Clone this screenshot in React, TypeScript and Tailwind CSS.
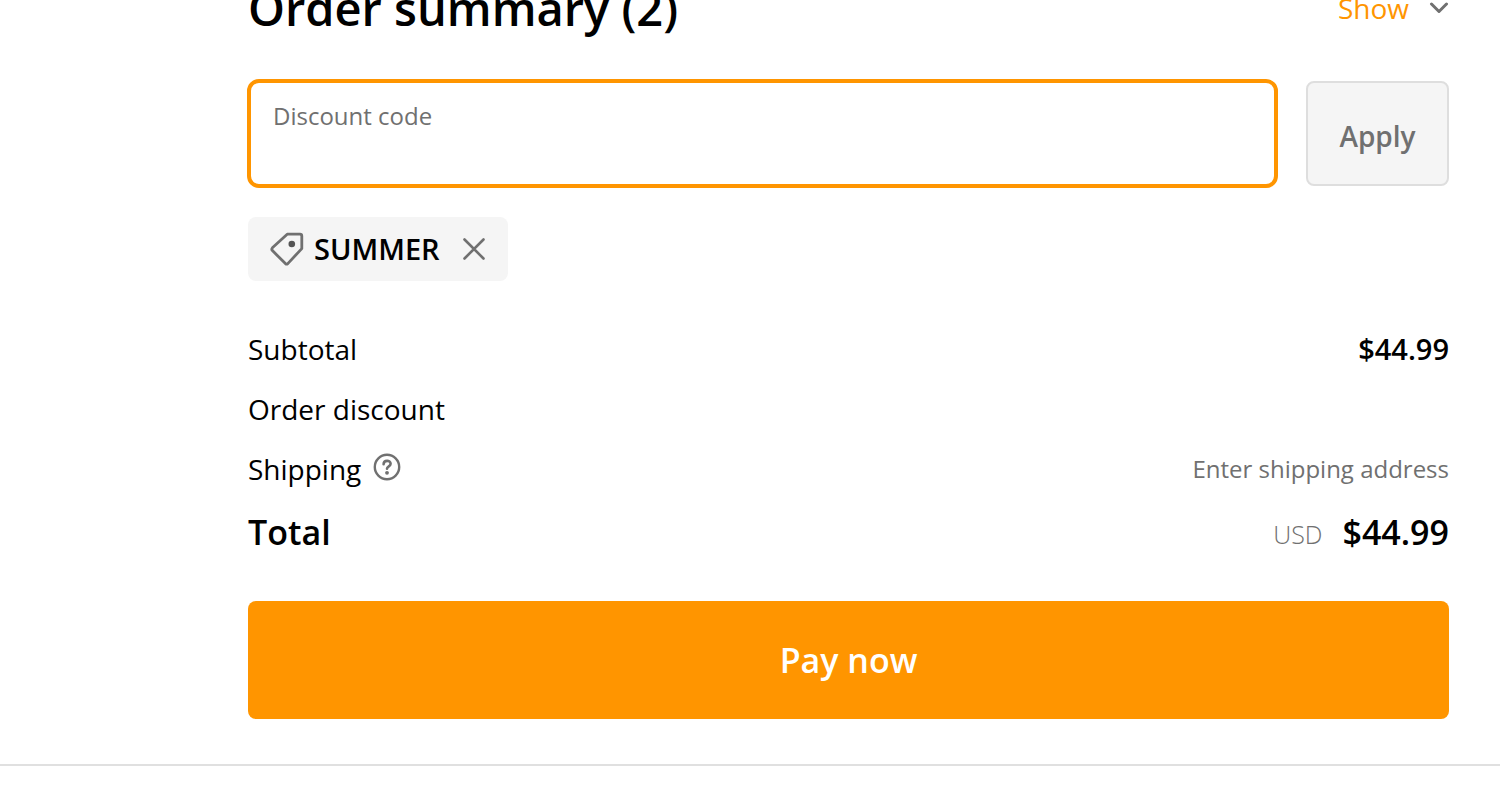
import { useState } from "react";
import type { FormEvent } from "react";

const TagIcon = () => (
  <svg
    viewBox="0 0 34 34"
    className="size-[34px] shrink-0"
    fill="none"
    stroke="#707070"
    strokeWidth="2.8"
    strokeLinejoin="round"
    aria-hidden="true"
  >
    <path d="M17.2 2.2H30Q31.8 2.2 31.8 4V16.6L17.8 31.6Q16.6 32.6 15.4 31.6L2.4 18.6Q1.2 17.2 2.4 15.8Z" />
    <circle cx="21.8" cy="12" r="3.3" fill="#555555" stroke="none" />
  </svg>
);

const CloseIcon = () => (
  <svg
    viewBox="0 0 24 24"
    className="size-6"
    fill="none"
    stroke="#707070"
    strokeWidth="2.6"
    strokeLinecap="round"
    aria-hidden="true"
  >
    <path d="M2.5 2.5L21.5 21.5M21.5 2.5L2.5 21.5" />
  </svg>
);

const HelpIcon = () => (
  <svg
    viewBox="0 0 28 28"
    className="size-7"
    fill="none"
    stroke="#707070"
    strokeWidth="2.4"
    strokeLinecap="round"
    aria-hidden="true"
  >
    <circle cx="14" cy="14" r="12.2" />
    <path d="M10.6 11.2C10.6 6.8 17.6 6.8 17.6 10.8C17.6 13.4 14 13.2 14 15.8" strokeWidth="2.6" />
    <circle cx="14" cy="19.8" r="1.9" fill="#707070" stroke="none" />
  </svg>
);

const ChevronIcon = () => (
  <svg
    viewBox="0 0 20 12"
    className="h-3 w-5"
    fill="none"
    stroke="#707070"
    strokeWidth="3"
    strokeLinecap="round"
    strokeLinejoin="round"
    aria-hidden="true"
  >
    <path d="M2.5 2L10 9.5L17.5 2" />
  </svg>
);

const App = () => {
  const [code, setCode] = useState("");
  const [codes, setCodes] = useState<string[]>(["SUMMER"]);

  const handleApply = (e: FormEvent) => {
    e.preventDefault();
    const value = code.trim().toUpperCase();
    if (value && !codes.includes(value)) {
      setCodes([...codes, value]);
    }
    setCode("");
  };

  return (
    <main className="overflow-hidden bg-white font-['Segoe_UI','Open_Sans','Noto_Sans',sans-serif] text-[28px] leading-9 text-black">
      <section className="border-b-2 border-[#e0e0e0] pr-[51px] pb-[45px] pl-[248px]">
        {/* Header, partly scrolled out of view */}
        <header className="-mt-5 flex h-14 items-center justify-between">
          <h2 className="text-[47px] leading-14 font-semibold">
            Order summary (2)
          </h2>
          <button
            type="button"
            className="flex items-center gap-5 text-[#ff9500]"
          >
            Show
            <ChevronIcon />
          </button>
        </header>

        {/* Discount form */}
        <form
          onSubmit={handleApply}
          className="mt-[43px] -ml-px flex items-center gap-7"
        >
          <div className="flex h-[109px] flex-1 flex-col rounded-xl border-4 border-[#ff9500] px-[22px] pt-[17px]">
            <label
              htmlFor="discount"
              className="text-[24px] leading-8 text-[#707070]"
            >
              Discount code
            </label>
            <input
              id="discount"
              value={code}
              onChange={(e) => setCode(e.target.value)}
              className="w-full flex-1 outline-none"
            />
          </div>
          <button
            type="submit"
            className="h-[105px] w-[143px] rounded-lg border-2 border-[#dedede] bg-[#f5f5f5] pt-1 font-semibold text-[#707070]"
          >
            Apply
          </button>
        </form>

        <ul className="mt-[29px] flex gap-4">
          {codes.map((item) => (
            <li
              key={item}
              className="flex h-16 items-center rounded-lg bg-[#f5f5f5] px-[22px]"
            >
              <TagIcon />
              <span className="ml-[10px] text-[29px] font-semibold">
                {item}
              </span>
              <button
                type="button"
                aria-label={`Remove ${item}`}
                onClick={() => setCodes(codes.filter((c) => c !== item))}
                className="ml-[22px]"
              >
                <CloseIcon />
              </button>
            </li>
          ))}
        </ul>

        {/* Totals */}
        <dl className="mt-[38px]">
          <div className="flex h-[60px] items-center justify-between">
            <dt>Subtotal</dt>
            <dd className="text-[29px] font-semibold">$44.99</dd>
          </div>
          <div className="flex h-[60px] items-center justify-between">
            <dt>Order discount</dt>
          </div>
          <div className="flex h-[60px] items-center justify-between">
            <dt className="flex items-center gap-3">
              Shipping
              <button type="button" aria-label="Shipping policy" className="pb-1">
                <HelpIcon />
              </button>
            </dt>
            <dd className="text-[24px] text-[#707070]">
              Enter shipping address
            </dd>
          </div>
          <div className="flex h-[66px] items-center justify-between text-[34px] font-semibold">
            <dt>Total</dt>
            <dd className="flex items-center gap-5">
              <span className="pt-1 text-[25px] font-light text-[#707070]">
                USD
              </span>
              $44.99
            </dd>
          </div>
        </dl>

        <button
          type="button"
          className="mt-9 h-[118px] w-full rounded-lg bg-[#ff9500] text-[34px] font-semibold text-white"
        >
          Pay now
        </button>
      </section>
    </main>
  );
};

export default App;
